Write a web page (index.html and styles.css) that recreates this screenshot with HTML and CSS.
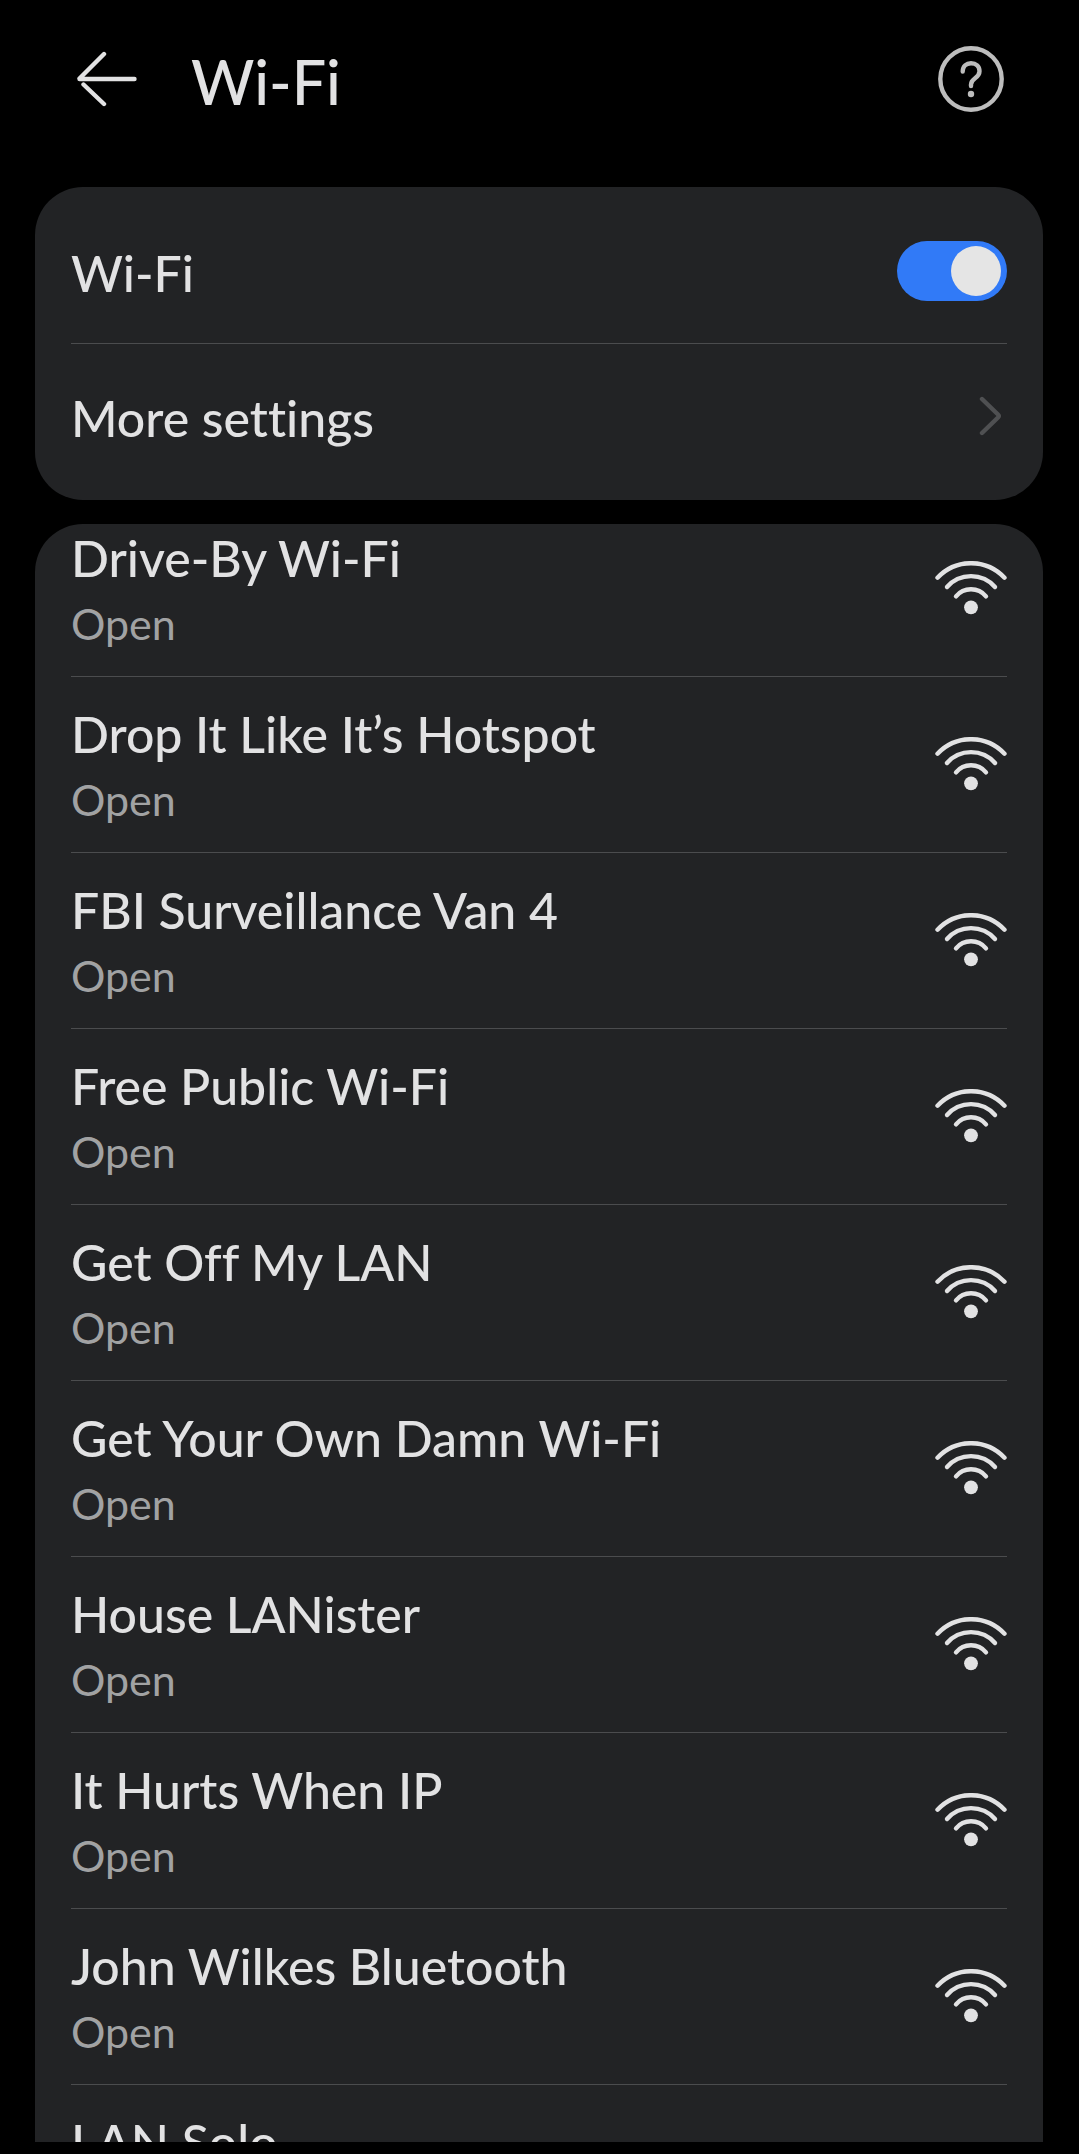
FILE: index.html
```html
<!DOCTYPE html>
<html lang="en">
<head>
<meta charset="utf-8">
<meta name="viewport" content="width=device-width, initial-scale=1">
<title>Wi-Fi</title>
<link rel="stylesheet" href="styles.css">
</head>
<body>
<svg class="sprite" aria-hidden="true">
  <symbol id="wifi" viewBox="0 0 72 54">
    <g fill="none" stroke="currentColor" stroke-width="4.4" stroke-linecap="round">
      <path d="M2.5 16.7A45.9 45.9 0 0 1 69.5 16.7"/>
      <path d="M12 26A32 32 0 0 1 60 26"/>
      <path d="M21 35.3A19.4 19.4 0 0 1 51 35.3"/>
    </g>
    <circle cx="36" cy="46.3" r="6.9" fill="currentColor"/>
  </symbol>
</svg>
<header class="topbar">
  <button class="icon-button" type="button" aria-label="Back">
    <svg class="icon-back" viewBox="0 0 60 56" fill="none" stroke="currentColor" stroke-width="4.4" stroke-linecap="round" stroke-linejoin="round"><path d="M27 3L2.5 27.5M2.5 28H57.5M6.5 33.5L27 53"/></svg>
  </button>
  <h1 class="title">Wi-Fi</h1>
  <button class="icon-button help" type="button" aria-label="Help">
    <svg class="icon-help" viewBox="0 0 66 66" fill="none" stroke="currentColor" stroke-width="4.4" stroke-linecap="round"><circle cx="33" cy="33" r="30.7"/><path d="M24.700 25.500C24.700 20 28.500 17.200 33 17.200C38 17.200 41.500 20.500 41.500 25.200C41.500 32.500 33 32 33 38.500V40"/><circle cx="33" cy="48" r="3.200" fill="currentColor" stroke="none"/></svg>
  </button>
</header>
<main class="content">
  <section class="card settings">
    <div class="setting">
      <label class="name" for="wifi-switch">Wi-Fi</label>
      <input class="switch" id="wifi-switch" type="checkbox" role="switch" checked>
    </div>
    <a class="setting" href="#more">
      <span class="name">More settings</span>
      <svg class="icon-chevron" viewBox="0 0 24 40" fill="none" stroke="currentColor" stroke-width="4.4" stroke-linecap="round" stroke-linejoin="round"><path d="M4 3L20 18.5Q21.5 20 20 21.5L4 37"/></svg>
    </a>
  </section>
  <section class="card networks" aria-label="Available networks">
    <ul class="list">
      <li><button class="network" type="button"><span class="text"><span class="name">Drive-By Wi-Fi</span><span class="status">Open</span></span><svg class="icon-wifi"><use href="#wifi"/></svg></button></li>
      <li><button class="network" type="button"><span class="text"><span class="name">Drop It Like It’s Hotspot</span><span class="status">Open</span></span><svg class="icon-wifi"><use href="#wifi"/></svg></button></li>
      <li><button class="network" type="button"><span class="text"><span class="name">FBI Surveillance Van 4</span><span class="status">Open</span></span><svg class="icon-wifi"><use href="#wifi"/></svg></button></li>
      <li><button class="network" type="button"><span class="text"><span class="name">Free Public Wi-Fi</span><span class="status">Open</span></span><svg class="icon-wifi"><use href="#wifi"/></svg></button></li>
      <li><button class="network" type="button"><span class="text"><span class="name">Get Off My LAN</span><span class="status">Open</span></span><svg class="icon-wifi"><use href="#wifi"/></svg></button></li>
      <li><button class="network" type="button"><span class="text"><span class="name">Get Your Own Damn Wi-Fi</span><span class="status">Open</span></span><svg class="icon-wifi"><use href="#wifi"/></svg></button></li>
      <li><button class="network" type="button"><span class="text"><span class="name">House LANister</span><span class="status">Open</span></span><svg class="icon-wifi"><use href="#wifi"/></svg></button></li>
      <li><button class="network" type="button"><span class="text"><span class="name">It Hurts When IP</span><span class="status">Open</span></span><svg class="icon-wifi"><use href="#wifi"/></svg></button></li>
      <li><button class="network" type="button"><span class="text"><span class="name">John Wilkes Bluetooth</span><span class="status">Open</span></span><svg class="icon-wifi"><use href="#wifi"/></svg></button></li>
      <li><button class="network" type="button"><span class="text"><span class="name">LAN Solo</span><span class="status">Open</span></span><svg class="icon-wifi"><use href="#wifi"/></svg></button></li>
    </ul>
  </section>
</main>
</body>
</html>
```
FILE: styles.css
```css
* { box-sizing: border-box; }

body {
  margin: 0;
  height: 100vh;
  display: flex;
  flex-direction: column;
  padding: 0 36px 12px 35px;
  background: #000;
  color: #e2e2e3;
  font-family: Lato, "Open Sans", sans-serif;
  font-variant-ligatures: none;
  overflow: hidden;
}

button {
  border: 0;
  padding: 0;
  background: none;
  color: inherit;
  font: inherit;
  font-variant-ligatures: none;
  text-align: left;
}

a { color: inherit; text-decoration: none; }
svg { display: block; flex: none; }
.sprite { position: absolute; width: 0; height: 0; }

.topbar {
  flex: none;
  display: flex;
  align-items: center;
  gap: 54px;
  height: 187px;
  padding: 0 39px 30px 42px;
}

.title { margin: 0; font-size: 61px; line-height: 72px; font-weight: 500; padding-top: 6px; }
.help { margin-left: auto; color: #bdbdbd; }
.icon-back { width: 60px; height: 56px; }
.icon-help { width: 66px; height: 66px; }

.content {
  flex: 1;
  min-height: 0;
  display: flex;
  flex-direction: column;
  gap: 24px;
}

.card { background: #222325; border-radius: 48px; padding: 0 36px; }
.settings { flex: none; padding-block: 12px; }

.setting {
  display: flex;
  align-items: center;
  justify-content: space-between;
  height: 144px;
}
.setting + .setting { border-top: 1px solid #4b4c4e; height: 145px; }
.setting .name { padding-top: 4px; }

.name { font-size: 50px; line-height: 60px; font-weight: 500; }
.status { font-size: 43px; line-height: 60px; color: #a1a2a3; }

.switch {
  appearance: none;
  display: flex;
  align-items: center;
  justify-content: flex-end;
  width: 110px;
  height: 60px;
  margin: 0;
  padding: 0 6px;
  border-radius: 30px;
  background: #317af7;
}
.switch::before {
  content: "";
  width: 50px;
  height: 50px;
  border-radius: 50%;
  background: #e5e5e5;
}
.switch:not(:checked) { justify-content: flex-start; background: #55565a; }

.icon-chevron { width: 24px; height: 40px; margin-right: 5px; color: #4f5052; }

.networks {
  flex: 1;
  min-height: 0;
  overflow: hidden;
  border-radius: 48px 48px 0 0;
}

/* the list rests partly scrolled under the card's top edge */
.list { list-style: none; margin: -23px 0 0; padding: 0; }

.network {
  display: flex;
  align-items: center;
  justify-content: space-between;
  width: 100%;
  height: 176px;
  padding-bottom: 1px;
  border-bottom: 1px solid #4b4c4e;
}
.text { display: flex; flex-direction: column; gap: 6px; padding-top: 6px; }
.icon-wifi { width: 72px; height: 54px; }
```
